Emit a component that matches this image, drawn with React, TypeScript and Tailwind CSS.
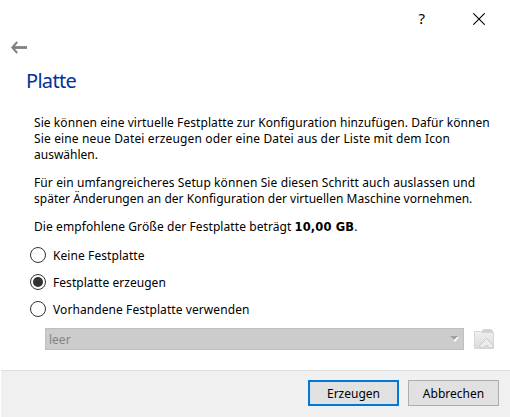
import type { ReactNode } from "react";

function Radio({ label, checked, tracking }: { label: string; checked?: boolean; tracking: string }) {
  return (
    <div role="radio" aria-checked={!!checked} className="flex h-[27px] items-start gap-[7px] pt-[5px]">
      <span className="flex size-4 shrink-0 items-center justify-center rounded-full border border-[#333] bg-white">
        {checked && <span className="size-[10px] rounded-full bg-[#333]" />}
      </span>
      <span className={`mt-px whitespace-nowrap leading-4 ${tracking}`}>{label}</span>
    </div>
  );
}

function Line({ children, tracking }: { children: ReactNode; tracking: string }) {
  return (
    <div className="h-4">
      <span className={`whitespace-nowrap ${tracking}`}>{children}</span>
    </div>
  );
}

function FolderIcon() {
  return (
    <svg width="20" height="20" viewBox="0 0 20 20" fill="none" aria-hidden="true">
      <defs>
        <linearGradient id="folder" x1="0" y1="0" x2="0" y2="1">
          <stop offset="0" stopColor="#f0f0f0" />
          <stop offset="1" stopColor="#dadada" />
        </linearGradient>
      </defs>
      <path d="M7.5 3.5 9 .8h8.5l1.5 2.7z" fill="#d2d2d2" stroke="#cecece" />
      <path d="M.5 2.5h6l1 1h12v16H.5z" fill="url(#folder)" stroke="#d6d6d6" />
      <path d="m12.5 9.5-7 7 1.7 2.7h1.8l3.5-3 3.5 3h1.8l1.7-2.7z" fill="#ececec" stroke="#c8c8c8" strokeLinejoin="round" />
    </svg>
  );
}

export default function App() {
  return (
    <div className="flex h-[417px] w-[510px] flex-col bg-white font-['Noto_Sans',sans-serif] text-xs leading-4 text-black">
      <header className="flex h-[38px] items-center justify-end gap-12 pr-[25px]">
        <span className="-mt-0.5 text-[15px] leading-5">?</span>
        <svg width="12" height="12" viewBox="0 0 12 12" stroke="#000" strokeWidth="1.1">
          <path d="m.3.3 11.4 11.4M11.7.3.3 11.7" />
        </svg>
      </header>
      <div className="flex h-[28px] pl-[11px] pt-[3px]">
        <svg width="16" height="13" viewBox="0 0 16 13" fill="none" stroke="#808080">
          <path d="M1.5 6.5H16" strokeWidth="2.8" />
          <path d="M6.2 1 1.3 6.5 6.2 12" strokeWidth="2" />
        </svg>
      </div>
      <h1 className="h-[49px] pl-[26px] pt-px text-xl leading-7 text-[#003399]">
        <span className="tracking-[-0.7px]">Platte</span>
      </h1>
      <main className="flex grow flex-col pl-[34px]">
        <div className="flex flex-col gap-3">
          <div>
            <Line tracking="tracking-[0.07px]">Sie können eine virtuelle Festplatte zur Konfiguration hinzufügen. Dafür können</Line>
            <Line tracking="tracking-[0.14px]">Sie eine neue Datei erzeugen oder eine Datei aus der Liste mit dem Icon</Line>
            <Line tracking="tracking-[0px]">auswählen.</Line>
          </div>
          <div>
            <Line tracking="tracking-[0.107px]">Für ein umfangreicheres Setup können Sie diesen Schritt auch auslassen und</Line>
            <Line tracking="tracking-[0.02px]">später Änderungen an der Konfiguration der virtuellen Maschine vornehmen.</Line>
          </div>
          <Line tracking="tracking-[0.08px]">
            Die empfohlene Größe der Festplatte beträgt{" "}
            <b className="font-['DejaVu_Sans',sans-serif] text-[11.5px] leading-none tracking-[0.12px]">10,00 GB</b>.
          </Line>
        </div>
        <div role="radiogroup" className="-ml-1 mt-[7px]">
          <Radio label="Keine Festplatte" tracking="tracking-[0.08px]" />
          <Radio label="Festplatte erzeugen" checked tracking="tracking-[0.05px]" />
          <Radio label="Vorhandene Festplatte verwenden" tracking="tracking-[0.08px]" />
        </div>
        <div className="ml-[11px] mt-[5px] flex items-center gap-[10px]">
          <div className="flex h-[22px] w-[419px] items-center justify-between border border-[#bfbfbf] bg-[#ccc] pl-[3px] pr-1 text-[#838383]">
            <span className="pt-0.5">leer</span>
            <svg width="9" height="6" viewBox="0 0 9 6">
              <path d="M1 1h8L5 6z" fill="#fff" />
              <path d="M0 0h8L4 4z" fill="#a0a0a0" />
            </svg>
          </div>
          <FolderIcon />
        </div>
      </main>
      <footer className="ml-px flex h-[47px] justify-end gap-[9px] border-t border-[#dfdfdf] bg-[#f0f0f0] pr-[11px] pt-[9px]">
        <button className="h-[26px] w-[91px] border-2 border-[#0078d7] bg-[#e1e1e1] pt-px text-center">Erzeugen</button>
        <button className="h-[26px] w-[91px] border border-[#adadad] bg-[#e1e1e1] pt-px text-center">Abbrechen</button>
      </footer>
    </div>
  );
}
